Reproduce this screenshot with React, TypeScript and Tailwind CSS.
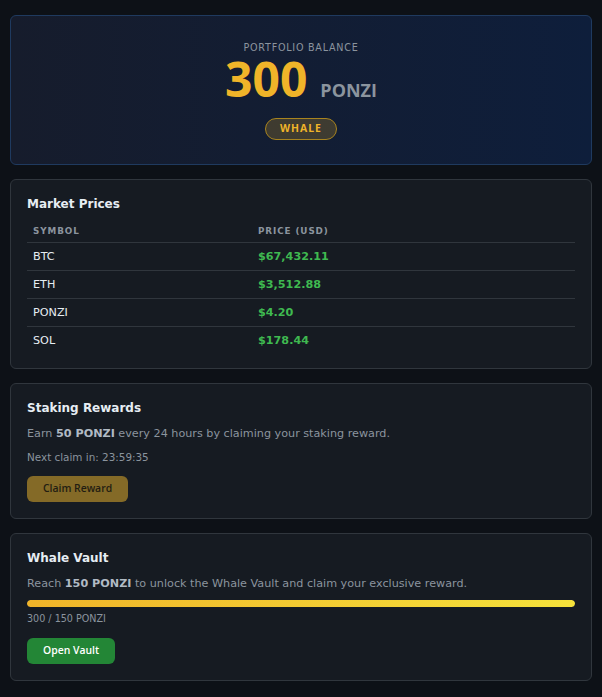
import React from 'react';

const prices = [
  { symbol: 'BTC', price: '$67,432.11' },
  { symbol: 'ETH', price: '$3,512.88' },
  { symbol: 'PONZI', price: '$4.20' },
  { symbol: 'SOL', price: '$178.44' },
];

const sans = "font-['DejaVu_Sans',sans-serif]";
const ui = "font-['Open_Sans','Noto_Sans',sans-serif]";

function Card({ title, children }: { title: string; children: React.ReactNode }) {
  return (
    <div className="rounded-[6px] border border-[#30363d] bg-[#161b22] px-4 pt-[17px] pb-4">
      <h2 className="text-[12px] font-bold leading-[15px] text-[#e6edf3]">{title}</h2>
      {children}
    </div>
  );
}

export default function App() {
  const balance = 300;
  const goal = 150;
  const progress = Math.min(100, (balance / goal) * 100);

  return (
    <div className={`min-h-screen bg-[#0d1117] px-[10px] pt-[15px] pb-4 ${sans}`}>
      <div className="flex flex-col gap-[14px]">
        {/* Balance */}
        <div className="flex flex-col items-center rounded-[6px] border border-[#1f3a5f] bg-linear-to-r from-[#161c2c] to-[#0e1e3b] pt-[25px] pb-6">
          <div className="text-[9.6px] uppercase leading-[14px] tracking-[0.75px] text-[#8b949e]">
            Portfolio Balance
          </div>
          <div className={`flex items-baseline gap-[13px] ${ui}`}>
            <span className="text-[48px] font-bold leading-none text-[#f0b429]">{balance}</span>
            <span className="text-[18px] font-bold leading-none text-[#8b949e]">PONZI</span>
          </div>
          <div
            className={`mt-[15px] flex h-[22px] items-center rounded-full border border-[#a8841f] bg-[#f0b429]/20 px-[14px] text-[10.4px] font-bold tracking-[1px] text-[#f0b429] ${ui}`}
          >
            WHALE
          </div>
        </div>

        {/* Market Prices */}
        <div className="rounded-[6px] border border-[#30363d] bg-[#161b22] px-4 pt-[17px] pb-[14px]">
          <h2 className="text-[12px] font-bold leading-[15px] text-[#e6edf3]">Market Prices</h2>
          <table className="mt-[7px] w-full border-collapse text-left">
            <thead>
              <tr className="h-[23px] border-b border-[#30363d]">
                <th className="w-[225px] px-[6px] pt-[2px] text-[8.8px] font-bold uppercase tracking-[0.9px] text-[#8b949e]">
                  Symbol
                </th>
                <th className="px-[6px] pt-[2px] text-[8.8px] font-bold uppercase tracking-[0.9px] text-[#8b949e]">
                  Price (USD)
                </th>
              </tr>
            </thead>
            <tbody>
              {prices.map((p, i) => (
                <tr
                  key={p.symbol}
                  className={`h-[28px] ${i < prices.length - 1 ? 'border-b border-[#30363d]' : ''}`}
                >
                  <td className="px-[6px] pt-[3px] text-[11.2px] text-[#e6edf3]">{p.symbol}</td>
                  <td className="px-[6px] pt-[3px] text-[11.2px] font-bold text-[#3fb950]">{p.price}</td>
                </tr>
              ))}
            </tbody>
          </table>
        </div>

        {/* Staking */}
        <Card title="Staking Rewards">
          <p className="mt-[10px] text-[11.2px] leading-[16px] text-[#8b949e]">
            Earn <strong className="font-bold text-[#b1bac4]">50 PONZI</strong> every 24 hours by claiming your
            staking reward.
          </p>
          <p className="mt-[8px] text-[10.4px] leading-[14px] text-[#8b949e]">Next claim in: 23:59:35</p>
          <button
            className={`mt-[12px] flex h-[26px] items-center rounded-[6px] bg-[#846a27] px-4 text-[10.4px] font-semibold text-[#221d12] ${ui}`}
            disabled
          >
            Claim Reward
          </button>
        </Card>

        {/* Whale Vault */}
        <Card title="Whale Vault">
          <p className="mt-[10px] text-[11.2px] leading-[16px] text-[#8b949e]">
            Reach <strong className="font-bold text-[#b1bac4]">150 PONZI</strong> to unlock the Whale Vault and claim
            your exclusive reward.
          </p>
          <div className="mt-[8px] h-[7px] w-full overflow-hidden rounded-full bg-[#30363d]">
            <div
              className="h-full rounded-full bg-linear-to-r from-[#f0b429] to-[#f5e23b]"
              style={{ width: `${progress}%` }}
            />
          </div>
          <p className="mt-[5px] text-[9.6px] leading-[14px] text-[#8b949e]">
            {balance} / {goal} PONZI
          </p>
          <button
            className={`mt-[12px] flex h-[26px] items-center rounded-[6px] bg-[#238636] px-4 text-[10.4px] font-semibold text-white ${ui}`}
          >
            Open Vault
          </button>
        </Card>
      </div>
    </div>
  );
}
